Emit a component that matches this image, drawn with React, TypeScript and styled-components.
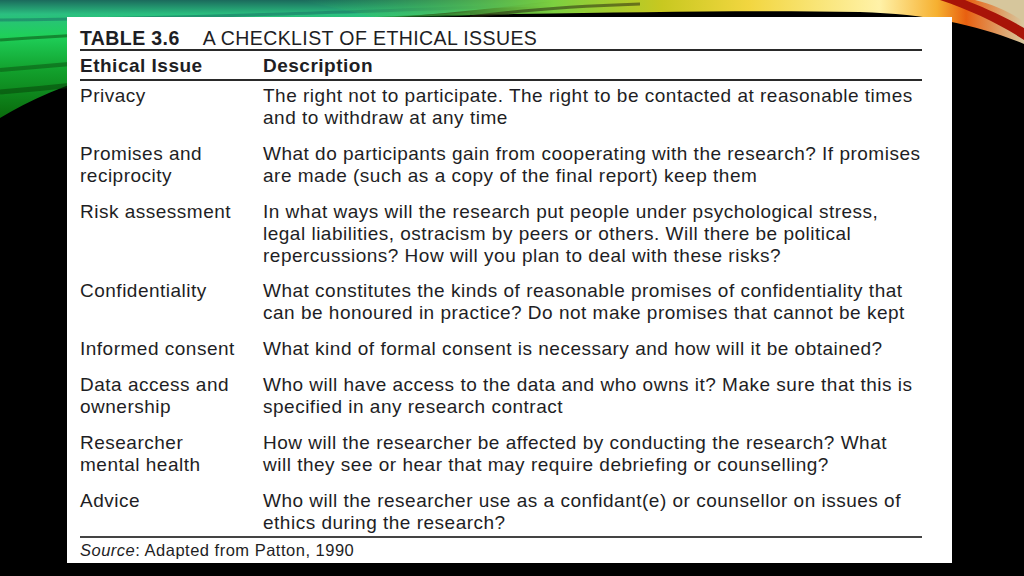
import React from 'react';
import styled, {createGlobalStyle} from 'styled-components';

const GlobalStyle = createGlobalStyle`
  html, body {
    margin: 0;
    padding: 0;
    background: #000;
  }
  body {
    width: 1024px;
    height: 576px;
    overflow: hidden;
    font-family: 'Liberation Sans', Arial, sans-serif;
  }
`;

const rows = [
  {
    issue: ['Privacy'],
    desc: ['The right not to participate. The right to be contacted at reasonable times', 'and to withdraw at any time'],
  },
  {
    issue: ['Promises and', 'reciprocity'],
    desc: ['What do participants gain from cooperating with the research? If promises', 'are made (such as a copy of the final report) keep them'],
  },
  {
    issue: ['Risk assessment'],
    desc: [
      'In what ways will the research put people under psychological stress,',
      'legal liabilities, ostracism by peers or others. Will there be political',
      'repercussions? How will you plan to deal with these risks?',
    ],
  },
  {
    issue: ['Confidentiality'],
    desc: ['What constitutes the kinds of reasonable promises of confidentiality that', 'can be honoured in practice? Do not make promises that cannot be kept'],
  },
  {
    issue: ['Informed consent'],
    desc: ['What kind of formal consent is necessary and how will it be obtained?'],
  },
  {
    issue: ['Data access and', 'ownership'],
    desc: ['Who will have access to the data and who owns it? Make sure that this is', 'specified in any research contract'],
  },
  {
    issue: ['Researcher', 'mental health'],
    desc: ['How will the researcher be affected by conducting the research? What', 'will they see or hear that may require debriefing or counselling?'],
  },
  {
    issue: ['Advice'],
    desc: ['Who will the researcher use as a confidant(e) or counsellor on issues of', 'ethics during the research?'],
  },
];

const Stage = styled.div`
  position: relative;
  width: 1024px;
  height: 576px;
  background: #000;
  padding: 17px 0 0 67px;
  box-sizing: border-box;
`;

const Swoosh = styled.svg`
  position: absolute;
  left: 0;
  top: 0;
  width: 1024px;
  height: 130px;
`;

const Panel = styled.div`
  position: relative;
  width: 885px;
  height: 546px;
  background: #fff;
  box-sizing: border-box;
  padding: 10px 30px 0 13px;
  color: #1e1e24;
`;

const Title = styled.div`
  display: flex;
  gap: 23px;
  font-size: 19.5px;
  letter-spacing: 0.4px;
  line-height: 22px;
  height: 22px;
  border-bottom: 2px solid #2a2a2a;
`;

const Strong = styled.span`
  font-weight: bold;
`;

const Grid = styled.div`
  display: grid;
  grid-template-columns: 183px 1fr;
`;

const Header = styled(Grid)`
  padding: 4px 0 2px;
  font-weight: bold;
  font-size: 19px;
  letter-spacing: 0.5px;
  line-height: 22px;
  border-bottom: 2px solid #2a2a2a;
`;

const Body = styled.div`
  display: flex;
  flex-direction: column;
  gap: 13.8px;
  padding: 4px 0 2px;
  border-bottom: 2px solid #444;
`;

const Row = styled(Grid)`
  font-size: 19px;
  letter-spacing: 0.5px;
  line-height: 22px;
`;

const Line = styled.div`
  white-space: nowrap;
`;

const Source = styled.div`
  font-size: 16.5px;
  letter-spacing: 0.5px;
  line-height: 22px;
  padding-top: 1px;

  em {
    font-style: italic;
  }
`;

const Decoration = () => (
  <Swoosh viewBox="0 0 1024 130">
    <defs>
      <linearGradient id="green" x1="0" y1="0" x2="0" y2="1">
        <stop offset="0" stopColor="#1b6a5c" />
        <stop offset="0.12" stopColor="#2bbf80" />
        <stop offset="0.3" stopColor="#1fd05a" />
        <stop offset="0.6" stopColor="#12a02c" />
        <stop offset="1" stopColor="#0a6a0c" />
      </linearGradient>
      <linearGradient id="band" x1="0" y1="0" x2="1" y2="0">
        <stop offset="0" stopColor="#2ab860" stopOpacity="0" />
        <stop offset="0.35" stopColor="#7cd040" />
        <stop offset="0.5" stopColor="#c8c820" />
        <stop offset="0.62" stopColor="#f2d640" />
        <stop offset="0.8" stopColor="#fff2a8" />
        <stop offset="0.88" stopColor="#f6b030" />
        <stop offset="0.92" stopColor="#e86010" />
        <stop offset="1" stopColor="#d8c8a0" />
      </linearGradient>
    </defs>
    <path d="M0 0 H560 C 500 8, 440 14, 380 18 C 220 34, 80 70, 0 118 Z" fill="url(#green)" />
    <path d="M0 40 C 150 30, 300 22, 470 14" stroke="#0b5a18" strokeWidth="3" opacity="0.6" fill="none" />
    <path d="M0 70 C 120 60, 250 48, 400 30" stroke="#0a5010" strokeWidth="4" opacity="0.5" fill="none" />
    <path d="M0 92 C 100 84, 180 72, 300 52" stroke="#064008" strokeWidth="5" opacity="0.5" fill="none" />
    <path d="M0 20 C 200 18, 400 10, 560 4" stroke="#1a7a68" strokeWidth="3" opacity="0.6" fill="none" />
    <path d="M300 0 H1024 V44 C 980 26, 930 14, 860 12 C 760 10, 640 12, 520 14 C 460 15, 420 16, 380 18 Z" fill="url(#band)" />
    <path d="M470 17 C 520 10, 580 6, 640 4" stroke="#2a2a10" strokeWidth="3" opacity="0.55" fill="none" />
    <path d="M940 0 C 970 10, 1000 24, 1024 40 V28 C 1000 14, 980 6, 965 0 Z" fill="#a81408" />
    <path d="M975 0 H1024 V22 C 1010 12, 995 5, 975 0 Z" fill="#d6c69c" />
  </Swoosh>
);

export default function App() {
  return (
    <>
      <GlobalStyle />
      <Stage>
        <Decoration />
        <Panel>
          <Title>
            <Strong>TABLE 3.6</Strong>
            <span>A CHECKLIST OF ETHICAL ISSUES</span>
          </Title>
          <Header>
            <div>Ethical Issue</div>
            <div>Description</div>
          </Header>
          <Body>
            {rows.map((row) => (
              <Row key={row.issue.join(' ')}>
                <div>
                  {row.issue.map((l) => (
                    <Line key={l}>{l}</Line>
                  ))}
                </div>
                <div>
                  {row.desc.map((l) => (
                    <Line key={l}>{l}</Line>
                  ))}
                </div>
              </Row>
            ))}
          </Body>
          <Source>
            <em>Source</em>: Adapted from Patton, 1990
          </Source>
        </Panel>
      </Stage>
    </>
  );
}
